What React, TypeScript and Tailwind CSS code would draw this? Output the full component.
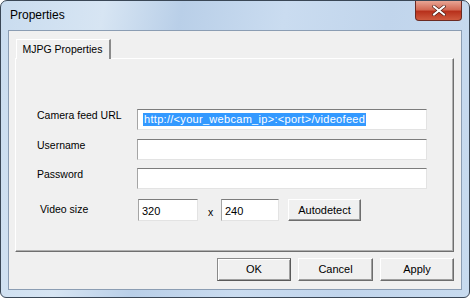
import React from 'react';

const font = { fontFamily: "'Liberation Sans', Arial, sans-serif" };

function TextBox({ className = '', children }: { className?: string; children?: React.ReactNode }) {
  return (
    <div
      className={`bg-white border border-t-[#7c7c7c] border-l-[#a5a5a5] border-r-[#e3e3e3] border-b-[#e3e3e3] flex items-center text-[11px] text-black ${className}`}
    >
      {children}
    </div>
  );
}

function Button({ label, isDefault = false, className = '' }: { label: string; isDefault?: boolean; className?: string }) {
  return (
    <div
      className={`bg-[#f0f0f0] flex items-center justify-center text-[11px] text-black border ${
        isDefault
          ? 'border-t-[#8a8a8a] border-l-[#8a8a8a] border-r-[#5a5a5a] border-b-[#5a5a5a] shadow-[inset_1px_1px_0_#ffffff,inset_-1px_-1px_0_#a0a0a0]'
          : 'border-t-[#ffffff] border-l-[#ffffff] border-r-[#6d6d6d] border-b-[#6d6d6d] shadow-[inset_-1px_-1px_0_#a0a0a0]'
      } ${className}`}
    >
      {label}
    </div>
  );
}

export default function App() {
  return (
    <div className="w-[470px] h-[298px] bg-white" style={font}>
      <div className="w-[470px] h-[298px] rounded-t-[7px] rounded-b-[6px] border border-[#3a4756] bg-[linear-gradient(100deg,#c9dcef_0%,#d7e5f3_20%,#b9cfe8_35%,#cadcf0_55%,#c1d5ec_75%,#c8dbef_100%)] flex flex-col overflow-hidden">
        {/* Title bar */}
        <div className="h-[29px] flex items-start justify-between">
          <div className="pl-[9px] pt-[7px] text-[12px] text-black leading-[15px]">Properties</div>
          <div className="mr-[7px] w-[47px] h-[20px] rounded-b-[4px] border border-t-0 border-[#6b2a22] bg-[linear-gradient(180deg,#e8a595_0%,#d36a55_45%,#b8311c_55%,#cf5a3e_100%)] flex items-center justify-center">
            <svg width="14" height="11" viewBox="0 0 14 11">
              <path d="M2 1.5 L12 9.5 M12 1.5 L2 9.5" stroke="#4a1a12" strokeWidth="3.4" strokeLinecap="square" />
              <path d="M2 1.5 L12 9.5 M12 1.5 L2 9.5" stroke="#ffffff" strokeWidth="2" strokeLinecap="square" />
            </svg>
          </div>
        </div>

        {/* Client area */}
        <div className="mx-[7px] h-[260px] border border-[#8b9db3] bg-[#f0f0f0] flex flex-col">
          <div className="pl-[6px] pt-[8px] pr-[7px] flex flex-col">
            {/* Tab header */}
            <div className="ml-[1px] w-[95px] h-[20px] bg-[#f0f0f0] border-t border-l border-t-white border-l-white border-r-2 border-r-[#8a8a8a] flex items-center justify-center pr-[1px] text-[10.5px] text-black relative z-10 -mb-[1px]">
              MJPG Properties
            </div>
            {/* Tab panel */}
            <div className="h-[194px] border border-t-white border-l-white border-r-[#6f6f6f] border-b-[#6f6f6f] shadow-[inset_-1px_-1px_0_#b0b0b0] flex flex-col pt-[50px] text-[10.5px] text-black">
              <div className="flex items-center h-[21px]">
                <div className="w-[121px] pl-[21px] pb-[8px]">Camera feed URL</div>
                <TextBox className="w-[290px] h-[21px] pl-[5px] pb-[1px]">
                  <span className="bg-[#3399ff] text-white leading-[13px] px-[1px] tracking-[0.3px]">http://&lt;your_webcam_ip&gt;:&lt;port&gt;/videofeed</span>
                </TextBox>
              </div>
              <div className="flex items-center h-[21px] mt-[9px]">
                <div className="w-[121px] pl-[21px] pb-[8px]">Username</div>
                <TextBox className="w-[290px] h-[21px]" />
              </div>
              <div className="flex items-center h-[21px] mt-[8px]">
                <div className="w-[121px] pl-[21px] pb-[8px]">Password</div>
                <TextBox className="w-[290px] h-[21px]" />
              </div>
              <div className="flex items-center h-[22px] mt-[10px]">
                <div className="w-[122px] pl-[24px] pb-[1px]">Video size</div>
                <TextBox className="w-[60px] h-[22px] pl-[3px] items-start pt-[3px]">320</TextBox>
                <div className="w-[23px] pl-[10px] pt-[5px]">x</div>
                <TextBox className="w-[58px] h-[22px] pl-[3px] items-start pt-[3px]">240</TextBox>
                <Button label="Autodetect" className="ml-[9px] w-[73px] h-[22px]" />
              </div>
            </div>
          </div>
          {/* Button row */}
          <div className="flex justify-end gap-[7px] pr-[7px] pt-[6px]">
            <Button label="OK" isDefault className="w-[74px] h-[23px]" />
            <Button label="Cancel" className="w-[75px] h-[23px]" />
            <Button label="Apply" className="w-[74px] h-[23px]" />
          </div>
        </div>
      </div>
    </div>
  );
}
